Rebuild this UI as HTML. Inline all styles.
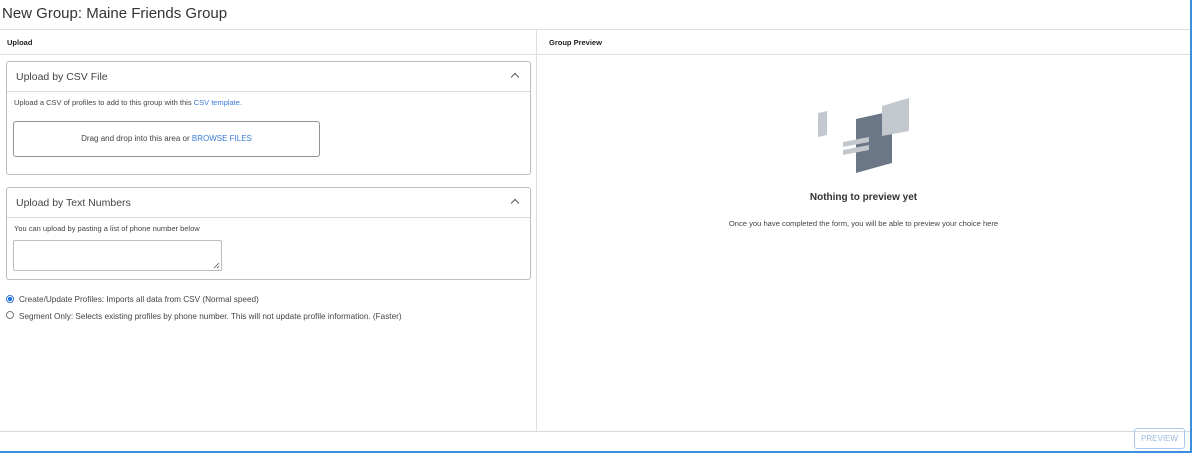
<!DOCTYPE html><html><head><style>
*{box-sizing:border-box;margin:0;padding:0}
body{width:1194px;height:453px;background:#fff;font-family:"Liberation Sans",sans-serif;color:#333;position:relative;overflow:hidden}
.abs{position:absolute}
.card{position:absolute;border:1px solid #b9bdc4;border-radius:3px;background:#fff}
.ch{height:30px;border-bottom:1px solid #d6d9dd;font-size:10.5px;padding:9px 9px;color:#444;position:relative}
.chev{position:absolute;right:12px;top:12px;width:6px;height:6px;border-left:1.3px solid #555;border-top:1.3px solid #555;transform:rotate(45deg)}
.s{font-size:7.5px;color:#444}
a{color:#3a7bd5;text-decoration:none}
</style></head><body>
<div class="abs" style="left:2px;top:5px;font-size:15px;color:#333">New Group: Maine Friends Group</div>
<div class="abs" style="left:0;top:29px;width:1190px;height:1px;background:#dcdfe3"></div>
<div class="abs" style="left:0;top:54px;width:1190px;height:1px;background:#dcdfe3"></div>
<div class="abs" style="left:536px;top:30px;width:1px;height:401px;background:#dcdfe3"></div>
<div class="abs" style="left:0;top:431px;width:1190px;height:1px;background:#d6d9dd"></div>
<div class="abs" style="left:1190px;top:0;width:2px;height:453px;background:#3b8fe0"></div>
<div class="abs" style="left:0;top:451px;width:1192px;height:2px;background:#3b8fe0"></div>
<div class="abs" style="left:7px;top:38px;font-size:7.5px;font-weight:bold;color:#222">Upload</div>
<div class="abs" style="left:549px;top:38px;font-size:7.5px;font-weight:bold;color:#222">Group Preview</div>

<div class="card" style="left:6px;top:61px;width:525px;height:114px">
<div class="ch">Upload by CSV File<span class="chev"></span></div>
<div class="abs s" style="left:7px;top:36px">Upload a CSV of profiles to add to this group with this <a>CSV template.</a></div>
<div class="abs" style="left:6px;top:59px;width:307px;height:36px;border:1px solid #8f949b;border-radius:3px;font-size:8px;color:#444;text-align:center;line-height:34px">Drag and drop into this area or <a>BROWSE FILES</a></div>
</div>

<div class="card" style="left:6px;top:187px;width:525px;height:93px">
<div class="ch">Upload by Text Numbers<span class="chev"></span></div>
<div class="abs s" style="left:7px;top:36px">You can upload by pasting a list of phone number below</div>
<div class="abs" style="left:6px;top:52px;width:209px;height:31px;border:1px solid #b9bdc4;border-radius:2px">
<svg class="abs" style="right:1px;bottom:1px" width="7" height="7"><path d="M1 6L6 1M4 6L6 4" stroke="#555" stroke-width="0.8"/></svg></div>
</div>

<div class="abs" style="left:6px;top:295px;width:8px;height:8px;border-radius:50%;border:1px solid #3a7bd5;background:radial-gradient(#1a73e8 45%,#fff 55%)"></div>
<div class="abs s" style="left:19px;top:295px;font-size:8.2px">Create/Update Profiles: Imports all data from CSV (Normal speed)</div>
<div class="abs" style="left:6px;top:311px;width:8px;height:8px;border-radius:50%;border:1px solid #777"></div>
<div class="abs s" style="left:19px;top:312px;font-size:8.2px">Segment Only: Selects existing profiles by phone number. This will not update profile information. (Faster)</div>

<svg class="abs" style="left:780px;top:80px" width="160" height="110">
<polygon points="38,33 47,31 47,55 38,57" fill="#c3c8cf"/>
<polygon points="76,39 112,31 112,83 76,93" fill="#6b7686"/>
<polygon points="102,26 129,18 129,51 102,56" fill="#c3c8cf"/>
<polygon points="63,62 89,57 89,62 63,67" fill="#c3c8cf"/>
<polygon points="63,70 89,65 89,70 63,75" fill="#c3c8cf"/>
</svg>
<div class="abs" style="left:700px;top:192px;width:327px;text-align:center;font-size:10px;font-weight:bold;color:#333">Nothing to preview yet</div>
<div class="abs" style="left:640px;top:219px;width:447px;text-align:center;font-size:7.6px;color:#444">Once you have completed the form, you will be able to preview your choice here</div>

<div class="abs" style="left:1134px;top:428px;width:51px;height:21px;border:1px solid #a8c8f0;border-radius:3px;font-size:8px;color:#9ab8dc;text-align:center;line-height:19px">PREVIEW</div>
</body></html>
